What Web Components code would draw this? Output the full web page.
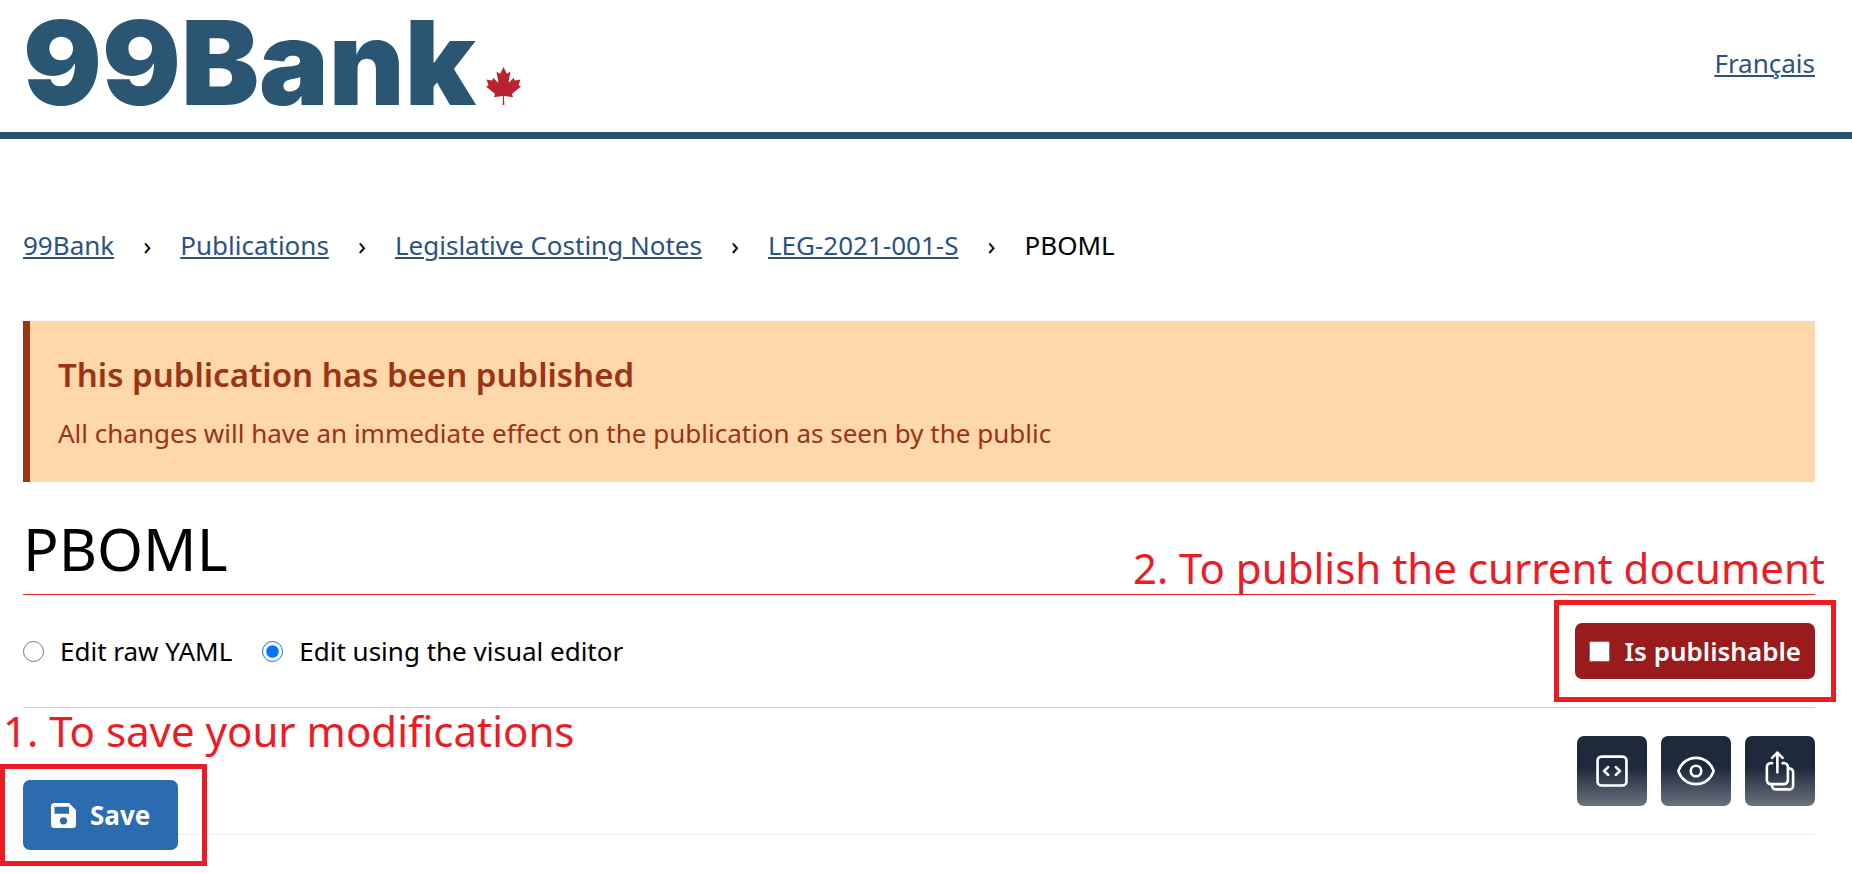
<!DOCTYPE html>
<html lang="en">
<head>
<meta charset="utf-8">
<meta name="viewport" content="width=device-width, initial-scale=1">
<title>PBOML - 99Bank</title>
<style>
  body {
    margin: 0;
    background: #fff;
    color: #000;
    font: 26px/42px "Noto Sans", "Segoe UI", sans-serif;
    --link: #2c5282;
    --mark: #ed1c24;
  }
</style>
</head>
<body>
<bank-header></bank-header>
<bank-page>
  <bank-breadcrumbs></bank-breadcrumbs>
  <bank-alert>
    <span slot="title">This publication has been published</span>
    All changes will have an immediate effect on the publication as seen by the public
  </bank-alert>
  <bank-title note="2. To publish the current document">PBOML</bank-title>
  <edit-options></edit-options>
  <edit-toolbar></edit-toolbar>
</bank-page>

<script>
class Base extends HTMLElement {
  constructor() {
    super();
    this.attachShadow({ mode: "open" }).innerHTML =
      "<style>*{box-sizing:border-box}:host{display:block}</style>" + this.render();
  }
}

customElements.define("bank-header", class extends Base {
  render() {
    return `<style>
      header { display: flex; align-items: center; justify-content: space-between;
        padding: 0 37px 6px 23px; border-bottom: 7px solid #2c5070; }
      .logo { display: flex; align-items: baseline; gap: 10px; color: #2a5674; text-decoration: none;
        font: 900 117px/126px Inter, "Arial Black", sans-serif; }
      svg { width: 35px; height: 38px; margin-bottom: 2px; fill: #b8232f; }
      .lang { color: var(--link); text-decoration: underline 2px; text-underline-offset: 2px; }
    </style>
    <header>
      <a class="logo" href="#">99Bank<svg viewBox="2940 400 3720 4030" preserveAspectRatio="none" aria-hidden="true"><path d="m4890 4430-45-863a95 95 0 0 1 111-98l859 151-116-320a65 65 0 0 1 20-73l941-762-212-99a65 65 0 0 1-34-79l186-572-542 115a65 65 0 0 1-73-38l-105-247-423 454a65 65 0 0 1-111-57l204-1052-327 189a65 65 0 0 1-91-27l-332-652-332 652a65 65 0 0 1-91 27l-327-189 204 1052a65 65 0 0 1-111 57l-423-454-105 247a65 65 0 0 1-73 38l-542-115 186 572a65 65 0 0 1-34 79l-212 99 941 762a65 65 0 0 1 20 73l-116 320 859-151a95 95 0 0 1 111 98l-45 863z"/></svg></a>
      <a class="lang" href="#" lang="fr">Français</a>
    </header>`;
  }
});

customElements.define("bank-page", class extends Base {
  render() {
    return `<style>main { padding: 85px 37px 39px 23px; }</style><main><slot></slot></main>`;
  }
});

customElements.define("bank-breadcrumbs", class extends Base {
  render() {
    const links = ["99Bank", "Publications", "Legislative Costing Notes", "LEG-2021-001-S"];
    return `<style>
      :host { margin-bottom: 55px; }
      nav { display: flex; flex-wrap: wrap; column-gap: 29px; }
      a { color: var(--link); text-decoration: underline 2px; text-underline-offset: 2px; }
    </style>
    <nav aria-label="Breadcrumb">${links.map(t => `<a href="#">${t}</a><span aria-hidden="true">›</span>`).join("")}<span aria-current="page">PBOML</span></nav>`;
  }
});

customElements.define("bank-alert", class extends Base {
  render() {
    return `<style>
      section { padding: 28px; border-left: 7px solid #9a3412; background: #fed7aa; color: #9a3412; }
      h2 { margin: 0 0 12px; font-size: 33px; line-height: 51px; font-weight: 600; }
      p { margin: 0; }
    </style>
    <section role="alert"><h2><slot name="title"></slot></h2><p><slot></slot></p></section>`;
  }
});

customElements.define("bank-title", class extends Base {
  render() {
    return `<style>
      :host { position: relative; margin-top: 28px; }
      h1 { margin: 0; padding-bottom: 8px; border-bottom: 1px solid #dc2626;
        font-size: 59px; line-height: 76px; font-weight: 400; }
      .note { position: absolute; right: -10px; bottom: -1px; color: var(--mark);
        font-size: 42px; line-height: 56px; white-space: nowrap; }
    </style>
    <h1><slot></slot></h1><div class="note">${this.getAttribute("note")}</div>`;
  }
});

customElements.define("edit-options", class extends Base {
  render() {
    return `<style>
      form { display: flex; align-items: center; gap: 30px; padding: 28px 0; border-bottom: 1px solid #d4d4d4; }
      label { display: flex; align-items: center; gap: 16px; }
      input { width: 21px; height: 21px; margin: 0; }
      .publish { position: relative; margin-left: auto; padding: 7px 14px; border-radius: 7px;
        gap: 14px; background: #991b1b; color: #fff; font-weight: 600; }
      .frame { position: absolute; inset: -23px -21px; border: 5px solid var(--mark); pointer-events: none; }
    </style>
    <form>
      <label><input type="radio" name="mode">Edit raw YAML</label>
      <label><input type="radio" name="mode" checked>Edit using the visual editor</label>
      <label class="publish"><input type="checkbox">Is publishable<span class="frame"></span></label>
    </form>`;
  }
});

customElements.define("icon-button", class extends Base {
  render() {
    return `<style>
      button { display: grid; place-items: center; width: 70px; height: 70px; padding: 0; border: 0;
        border-radius: 7px; background: linear-gradient(#1e293b 45%, #6b7280); }
      svg { width: 42px; height: 42px; fill: none; stroke: #fff; stroke-width: 1.5;
        stroke-linecap: round; stroke-linejoin: round; }
    </style>
    <button type="button" aria-label="${this.getAttribute("label")}"><svg viewBox="0 0 24 24" aria-hidden="true"><path d="${this.getAttribute("path")}"/></svg></button>`;
  }
});

customElements.define("edit-toolbar", class extends Base {
  render() {
    return `<style>
      :host { position: relative; }
      .tools { display: flex; justify-content: flex-end; gap: 14px; padding: 28px 0; border-bottom: 1px solid #eee; }
      .note { position: absolute; left: -20px; top: -5px; color: var(--mark);
        font-size: 42px; line-height: 56px; white-space: nowrap; }
      .save { position: absolute; left: 0; bottom: -15px; }
      button { display: flex; align-items: center; gap: 14px; height: 70px; padding: 0 28px; border: 0;
        border-radius: 7px; background: #2b6cb0; color: #fff; font: inherit; font-weight: 700; }
      svg { width: 25px; height: 25px; fill: #fff; }
      .frame { position: absolute; inset: -16px -29px -16px -23px; border: 5px solid var(--mark); pointer-events: none; }
    </style>
    <div class="tools">
      <icon-button label="Source" path="M14.25 9.75 16.5 12l-2.25 2.25m-4.5 0L7.5 12l2.25-2.25M6 20.25h12A2.25 2.25 0 0 0 20.25 18V6A2.25 2.25 0 0 0 18 3.75H6A2.25 2.25 0 0 0 3.75 6v12A2.25 2.25 0 0 0 6 20.25Z"></icon-button>
      <icon-button label="Preview" path="M2.036 12.322a1.012 1.012 0 0 1 0-.639C3.423 7.51 7.36 4.5 12 4.5c4.638 0 8.573 3.007 9.963 7.178.07.207.07.431 0 .639C20.577 16.49 16.64 19.5 12 19.5c-4.638 0-8.573-3.007-9.963-7.178ZM15 12a3 3 0 1 1-6 0 3 3 0 0 1 6 0Z"></icon-button>
      <icon-button label="Export" path="M7.5 7.5h-.75A2.25 2.25 0 0 0 4.5 9.75v7.5a2.25 2.25 0 0 0 2.25 2.25h7.5a2.25 2.25 0 0 0 2.25-2.25v-7.5a2.25 2.25 0 0 0-2.25-2.25h-.75m0-3-3-3m0 0-3 3m3-3v11.25m6-2.25h.75a2.25 2.25 0 0 1 2.25 2.25v7.5a2.25 2.25 0 0 1-2.25 2.25h-7.5a2.25 2.25 0 0 1-2.25-2.25v-.75"></icon-button>
    </div>
    <div class="note">1. To save your modifications</div>
    <div class="save">
      <button type="button"><svg viewBox="0 0 25 25" aria-hidden="true"><path fill-rule="evenodd" d="M3.500 0H18L25 7V21.500A3.500 3.500 0 0 1 21.500 25H3.500A3.500 3.500 0 0 1 0 21.500V3.500A3.500 3.500 0 0 1 3.500 0ZM3.500 3.700V10.700H18V3.700ZM12.500 14.200a3.600 3.600 0 1 0 0 7.200a3.600 3.600 0 1 0 0-7.200Z"/></svg>Save</button>
      <span class="frame"></span>
    </div>`;
  }
});
</script>
</body>
</html>
